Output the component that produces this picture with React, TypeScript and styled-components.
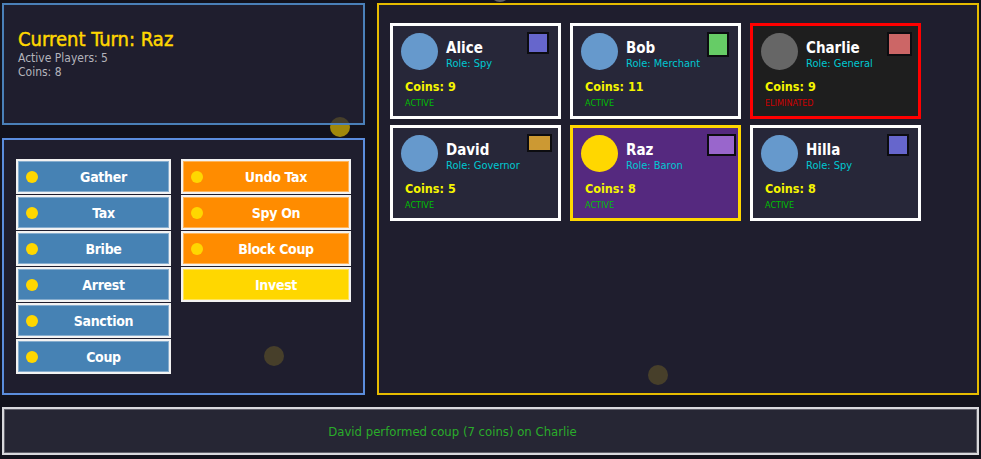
import React from "react";
import styled, { createGlobalStyle } from "styled-components";

const Global = createGlobalStyle`
  html, body { margin: 0; padding: 0; background: #12121c; }
  body { font-family: "DejaVu Sans Condensed", "DejaVu Sans", sans-serif; }
  * { box-sizing: border-box; }
`;

const Page = styled.div`
  position: relative;
  width: 981px;
  height: 459px;
  overflow: hidden;
  background: #12121c;
  padding: 3px 2px 4px 2px;
  display: grid;
  grid-template-rows: 392px 48px;
  row-gap: 12px;
`;

const Blob = styled.div<{ $x: number; $y: number; $c: string }>`
  position: absolute;
  left: ${(p) => p.$x - 10}px;
  top: ${(p) => p.$y - 10}px;
  width: 20px;
  height: 20px;
  border-radius: 50%;
  background: ${(p) => p.$c};
  z-index: 0;
`;

const Main = styled.div`
  display: grid;
  grid-template-columns: 362px 602px;
  column-gap: 13px;
  position: relative;
  z-index: 1;
`;

const LeftCol = styled.div`
  display: grid;
  grid-template-rows: 122px 257px;
  row-gap: 13px;
`;

const Panel = styled.div<{ $border: string }>`
  border: 2px solid ${(p) => p.$border};
  background: rgba(36, 34, 54, 0.72);
`;

const TurnPanel = styled(Panel)`
  padding: 22px 14px;
  display: flex;
  flex-direction: column;
`;

const TurnTitle = styled.div`
  color: #ffd700;
  font-size: 20px;
  font-weight: normal;
  line-height: 24px;
  -webkit-text-stroke: 0.45px #ffd700;
`;

const TurnInfo = styled.div`
  color: #b4b4bc;
  font-size: 12px;
  line-height: 14px;
`;

const ActionsPanel = styled(Panel)`
  padding: 19px 12px;
  display: grid;
  grid-template-columns: 155px 170px;
  column-gap: 10px;
  align-items: start;
`;

const ButtonCol = styled.div`
  display: flex;
  flex-direction: column;
  gap: 1px;
`;

const ActionButton = styled.div<{ $bg: string }>`
  height: 35px;
  background: ${(p) => p.$bg};
  border: 2px solid #f2f2f2;
  box-shadow: inset 0 0 0 1px rgba(255, 255, 255, 0.35);
  display: flex;
  align-items: center;
  padding-left: 8px;
  color: #ffffff;
  font-size: 14px;
  letter-spacing: -0.3px;
  font-weight: bold;
`;

const Dot = styled.span<{ $hidden?: boolean }>`
  width: 12px;
  height: 12px;
  border-radius: 50%;
  background: ${(p) => (p.$hidden ? "transparent" : "#ffd700")};
  flex: none;
`;

const ButtonLabel = styled.span`
  flex: 1;
  text-align: center;
`;

const PlayersPanel = styled(Panel)`
  padding: 18px 11px;
  display: grid;
  grid-template-columns: repeat(3, 171px);
  grid-auto-rows: 96px;
  column-gap: 9px;
  row-gap: 6px;
  align-content: start;
`;

const Card = styled.div<{ $bg: string; $border: string }>`
  position: relative;
  background: ${(p) => p.$bg};
  border: 3px solid ${(p) => p.$border};
  padding: 7px 8px 0 8px;
  display: flex;
  flex-direction: column;
`;

const CardHead = styled.div`
  display: flex;
  align-items: center;
  gap: 8px;
`;

const Avatar = styled.div<{ $c: string }>`
  width: 37px;
  height: 37px;
  border-radius: 50%;
  background: ${(p) => p.$c};
  flex: none;
`;

const NameBlock = styled.div`
  display: flex;
  flex-direction: column;
  padding-top: 5px;
`;

const Name = styled.div`
  color: #ffffff;
  font-size: 15px;
  font-weight: bold;
  line-height: 18px;
`;

const Role = styled.div`
  color: #00c8d2;
  font-size: 11px;
  line-height: 13px;
`;

const Coins = styled.div`
  color: #f5f500;
  font-size: 12.5px;
  font-weight: bold;
  margin: 9px 0 0 4px;
  line-height: 16px;
`;

const Status = styled.div<{ $c: string }>`
  color: ${(p) => p.$c};
  font-size: 9px;
  margin: 2px 0 0 4px;
  line-height: 12px;
`;

const ColorBox = styled.div<{ $c: string; $w: number; $h: number }>`
  position: absolute;
  left: 134px;
  top: 6px;
  width: ${(p) => p.$w}px;
  height: ${(p) => p.$h}px;
  background: ${(p) => p.$c};
  border: 2px solid #0c0c10;
`;

const LogBar = styled.div`
  position: relative;
  z-index: 1;
  border: 2px solid #d8d8dc;
  box-shadow: inset 0 0 0 1px #60606a;
  background: #262634;
  display: flex;
  align-items: center;
  justify-content: center;
  padding-right: 76px;
  color: #2aac2a;
  font-size: 13px;
`;

type Player = {
  name: string;
  role: string;
  coins: number;
  status: "ACTIVE" | "ELIMINATED";
  avatar: string;
  box: string;
  bw: number;
  bh: number;
  bg: string;
  border: string;
};

const players: Player[] = [
  { name: "Alice", role: "Spy", coins: 9, status: "ACTIVE", avatar: "#6699cc", box: "#6666cc", bw: 22, bh: 22, bg: "#272739", border: "#ffffff" },
  { name: "Bob", role: "Merchant", coins: 11, status: "ACTIVE", avatar: "#6699cc", box: "#66cc66", bw: 22, bh: 25, bg: "#272739", border: "#ffffff" },
  { name: "Charlie", role: "General", coins: 9, status: "ELIMINATED", avatar: "#666666", box: "#cc6666", bw: 25, bh: 24, bg: "#1e1e1e", border: "#ff0000" },
  { name: "David", role: "Governor", coins: 5, status: "ACTIVE", avatar: "#6699cc", box: "#cc9933", bw: 25, bh: 18, bg: "#272739", border: "#ffffff" },
  { name: "Raz", role: "Baron", coins: 8, status: "ACTIVE", avatar: "#ffd700", box: "#9966cc", bw: 29, bh: 22, bg: "#55297f", border: "#ffd700" },
  { name: "Hilla", role: "Spy", coins: 8, status: "ACTIVE", avatar: "#6699cc", box: "#6666cc", bw: 22, bh: 22, bg: "#272739", border: "#ffffff" },
];

const leftActions = ["Gather", "Tax", "Bribe", "Arrest", "Sanction", "Coup"];
const rightActions = [
  { label: "Undo Tax", bg: "#ff8c00", dot: true },
  { label: "Spy On", bg: "#ff8c00", dot: true },
  { label: "Block Coup", bg: "#ff8c00", dot: true },
  { label: "Invest", bg: "#ffd700", dot: false },
];

export default function App() {
  return (
    <>
      <Global />
      <Page>
        <Blob $x={340} $y={127} $c="rgba(255, 215, 0, 0.6)" />
        <Blob $x={274} $y={356} $c="rgba(255, 215, 0, 0.6)" />
        <Blob $x={658} $y={375} $c="rgba(255, 215, 0, 0.6)" />
        <Blob $x={500} $y={-8} $c="rgba(150, 150, 150, 0.6)" />
        <Main>
          <LeftCol>
            <TurnPanel $border="#4a80b8">
              <TurnTitle>Current Turn: Raz</TurnTitle>
              <TurnInfo>Active Players: 5</TurnInfo>
              <TurnInfo>Coins: 8</TurnInfo>
            </TurnPanel>
            <ActionsPanel $border="#5b8ddc">
              <ButtonCol>
                {leftActions.map((a) => (
                  <ActionButton key={a} $bg="#4682b4">
                    <Dot />
                    <ButtonLabel>{a}</ButtonLabel>
                  </ActionButton>
                ))}
              </ButtonCol>
              <ButtonCol>
                {rightActions.map((a) => (
                  <ActionButton key={a.label} $bg={a.bg}>
                    <Dot $hidden={!a.dot} />
                    <ButtonLabel>{a.label}</ButtonLabel>
                  </ActionButton>
                ))}
              </ButtonCol>
            </ActionsPanel>
          </LeftCol>
          <PlayersPanel $border="#e6bc00">
            {players.map((p) => (
              <Card key={p.name} $bg={p.bg} $border={p.border}>
                <CardHead>
                  <Avatar $c={p.avatar} />
                  <NameBlock>
                    <Name>{p.name}</Name>
                    <Role>Role: {p.role}</Role>
                  </NameBlock>
                </CardHead>
                <Coins>Coins: {p.coins}</Coins>
                <Status $c={p.status === "ACTIVE" ? "#00c000" : "#d00000"}>{p.status}</Status>
                <ColorBox $c={p.box} $w={p.bw} $h={p.bh} />
              </Card>
            ))}
          </PlayersPanel>
        </Main>
        <LogBar>David performed coup (7 coins) on Charlie</LogBar>
      </Page>
    </>
  );
}
